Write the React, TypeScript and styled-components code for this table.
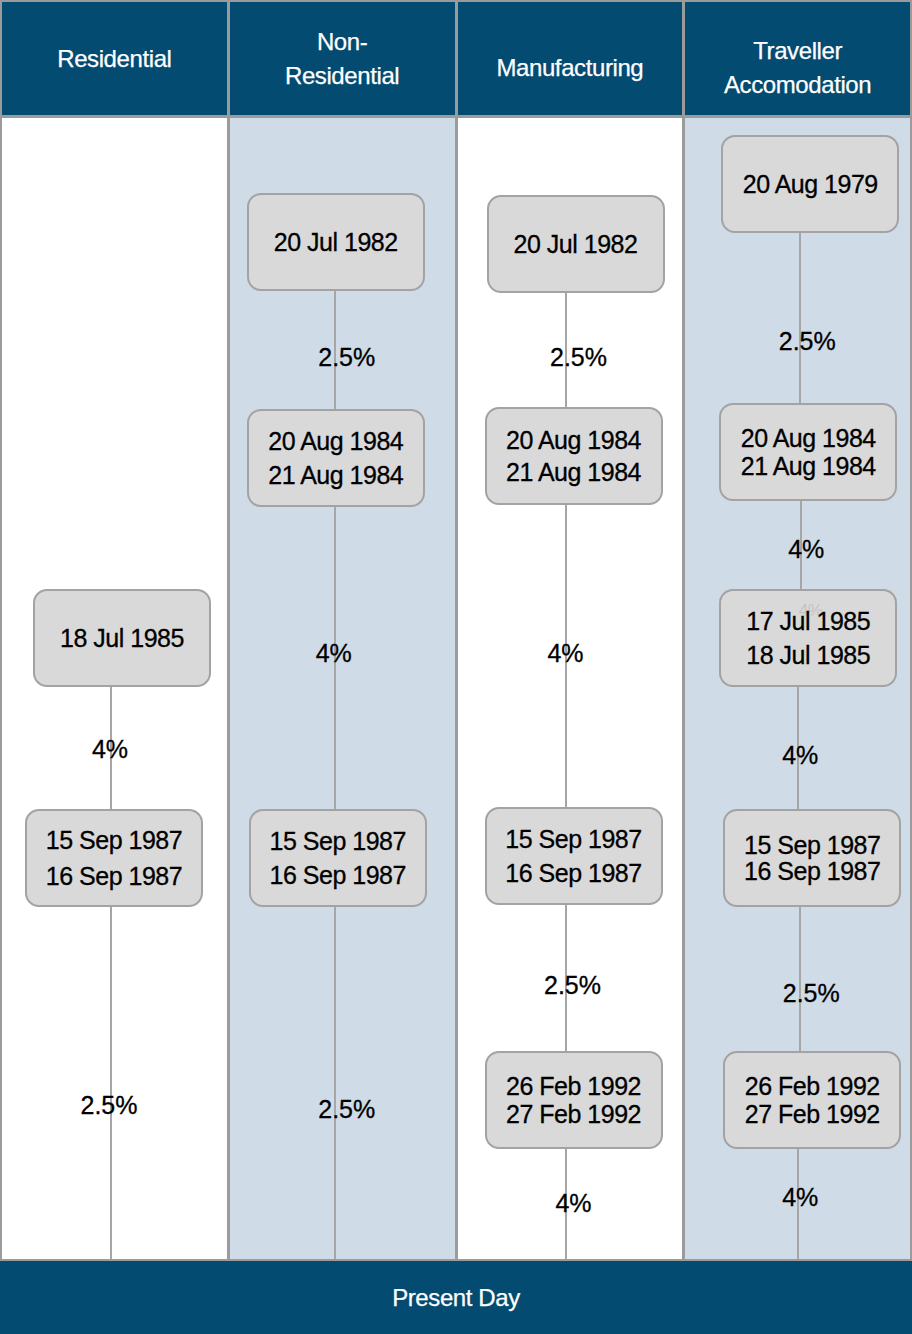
import React from 'react';
import styled, { createGlobalStyle } from 'styled-components';

type Node = { kind: 'node'; x: number; lines: string[]; lh: number; ghost?: string };
type Seg = { kind: 'seg'; h: number; line: number; ly: number; lx: number; label: string };
type Item = Node | Seg;

type Column = {
  title: string[];
  shaded: boolean;
  shift: number;
  top: number;
  items: Item[];
};

const columns: Column[] = [
  {
    title: ['Residential'],
    shaded: false,
    shift: 0,
    top: 471,
    items: [
      { kind: 'node', x: 31, lines: ['18 Jul 1985'], lh: 34 },
      { kind: 'seg', h: 122, line: 108, ly: 62, lx: 108, label: '4%' },
      { kind: 'node', x: 23, lines: ['15 Sep 1987', '16 Sep 1987'], lh: 36 },
      { kind: 'seg', h: 353, line: 108, ly: 198, lx: 107, label: '2.5%' },
    ],
  },
  {
    title: ['Non-', 'Residential'],
    shaded: true,
    shift: 0,
    top: 75,
    items: [
      { kind: 'node', x: 17, lines: ['20 Jul 1982'], lh: 34 },
      { kind: 'seg', h: 118, line: 104, ly: 66, lx: 117, label: '2.5%' },
      { kind: 'node', x: 17, lines: ['20 Aug 1984', '21 Aug 1984'], lh: 34 },
      { kind: 'seg', h: 302, line: 104, ly: 146, lx: 104, label: '4%' },
      { kind: 'node', x: 19, lines: ['15 Sep 1987', '16 Sep 1987'], lh: 34 },
      { kind: 'seg', h: 353, line: 104, ly: 202, lx: 117, label: '2.5%' },
    ],
  },
  {
    title: ['Manufacturing'],
    shaded: false,
    shift: 9,
    top: 77,
    items: [
      { kind: 'node', x: 29, lines: ['20 Jul 1982'], lh: 34 },
      { kind: 'seg', h: 114, line: 107, ly: 64, lx: 121, label: '2.5%' },
      { kind: 'node', x: 27, lines: ['20 Aug 1984', '21 Aug 1984'], lh: 32 },
      { kind: 'seg', h: 302, line: 107, ly: 148, lx: 108, label: '4%' },
      { kind: 'node', x: 27, lines: ['15 Sep 1987', '16 Sep 1987'], lh: 34 },
      { kind: 'seg', h: 146, line: 107, ly: 80, lx: 115, label: '2.5%' },
      { kind: 'node', x: 27, lines: ['26 Feb 1992', '27 Feb 1992'], lh: 28 },
      { kind: 'seg', h: 111, line: 107, ly: 54, lx: 116, label: '4%' },
    ],
  },
  {
    title: ['Traveller', 'Accomodation'],
    shaded: true,
    shift: 9,
    top: 17,
    items: [
      { kind: 'node', x: 36, lines: ['20 Aug 1979'], lh: 34 },
      { kind: 'seg', h: 170, line: 114, ly: 108, lx: 122, label: '2.5%' },
      { kind: 'node', x: 34, lines: ['20 Aug 1984', '21 Aug 1984'], lh: 28 },
      { kind: 'seg', h: 88, line: 115, ly: 48, lx: 121, label: '4%' },
      { kind: 'node', x: 34, lines: ['17 Jul 1985', '18 Jul 1985'], lh: 34, ghost: '4%' },
      { kind: 'seg', h: 122, line: 112, ly: 68, lx: 115, label: '4%' },
      { kind: 'node', x: 38, lines: ['15 Sep 1987', '16 Sep 1987'], lh: 26 },
      { kind: 'seg', h: 144, line: 114, ly: 86, lx: 126, label: '2.5%' },
      { kind: 'node', x: 38, lines: ['26 Feb 1992', '27 Feb 1992'], lh: 28 },
      { kind: 'seg', h: 111, line: 112, ly: 48, lx: 115, label: '4%' },
    ],
  },
];

const GlobalStyle = createGlobalStyle`
  html, body {
    margin: 0;
    padding: 0;
    background: #ffffff;
  }
  body {
    font-family: "Liberation Sans", Arial, Helvetica, sans-serif;
  }
  * {
    box-sizing: border-box;
  }
`;

const Page = styled.div`
  width: 912px;
  display: flex;
  flex-direction: column;
`;

const Grid = styled.div`
  display: grid;
  grid-template-columns: repeat(4, 1fr);
  grid-template-rows: 113px 1141px;
  grid-auto-flow: column;
  gap: 3px;
  padding: 2px;
  background: #9b9b9b;
`;

const HeaderCell = styled.div<{ $shift: number }>`
  background: #044b71;
  color: #ffffff;
  display: flex;
  flex-direction: column;
  align-items: center;
  justify-content: center;
  padding-top: ${(p) => p.$shift * 2}px;
  font-size: 24px;
  line-height: 34px;
  letter-spacing: -0.4px;
  -webkit-text-stroke: 0.25px #ffffff;
  text-align: center;
`;

const Body = styled.div<{ $shaded: boolean; $top: number }>`
  background: ${(p) => (p.$shaded ? '#cfdbe7' : '#ffffff')};
  display: flex;
  flex-direction: column;
  padding-top: ${(p) => p.$top}px;
  overflow: hidden;
`;

const DateBox = styled.div<{ $x: number; $lh: number }>`
  position: relative;
  margin-left: ${(p) => p.$x}px;
  width: 178px;
  height: 98px;
  flex: none;
  background: #d9d9d9;
  border: 2px solid #a3a3a3;
  border-radius: 14px;
  display: flex;
  flex-direction: column;
  align-items: center;
  justify-content: center;
  color: #000000;
  font-size: 25px;
  letter-spacing: -0.5px;
  line-height: ${(p) => p.$lh}px;
  -webkit-text-stroke: 0.3px #000000;
`;

const DateText = styled.span`
  position: relative;
  white-space: nowrap;
`;

const Ghost = styled.span`
  position: absolute;
  left: 50%;
  top: 10px;
  transform: translateX(-40%);
  font-size: 17px;
  line-height: 20px;
  color: #c4c4c4;
  -webkit-text-stroke: 0;
`;

const Segment = styled.div<{ $h: number; $line: number }>`
  position: relative;
  height: ${(p) => p.$h}px;
  flex: none;
  &::before {
    content: '';
    position: absolute;
    top: 0;
    bottom: 0;
    left: ${(p) => p.$line}px;
    width: 2px;
    background: #a6a6a6;
  }
`;

const Rate = styled.div<{ $ly: number; $lx: number }>`
  position: relative;
  margin-top: ${(p) => p.$ly - 14}px;
  margin-left: ${(p) => p.$lx - 40}px;
  width: 80px;
  text-align: center;
  font-size: 25px;
  line-height: 28px;
  color: #000000;
  -webkit-text-stroke: 0.3px #000000;
`;

const Footer = styled.div`
  height: 73px;
  background: #044b71;
  color: #ffffff;
  display: flex;
  align-items: center;
  justify-content: center;
  font-size: 24px;
  letter-spacing: -0.4px;
  -webkit-text-stroke: 0.25px #ffffff;
`;

const TimelineItem = ({ item }: { item: Item }) => {
  if (item.kind === 'node') {
    return (
      <DateBox $x={item.x} $lh={item.lh}>
        {item.ghost && <Ghost>{item.ghost}</Ghost>}
        {item.lines.map((l) => (
          <DateText key={l}>{l}</DateText>
        ))}
      </DateBox>
    );
  }
  return (
    <Segment $h={item.h} $line={item.line}>
      <Rate $ly={item.ly} $lx={item.lx}>
        {item.label}
      </Rate>
    </Segment>
  );
};

const App = () => {
  return (
    <Page>
      <GlobalStyle />
      <Grid>
        {columns.map((col) => (
          <React.Fragment key={col.title.join(' ')}>
            <HeaderCell $shift={col.shift}>
              {col.title.map((t) => (
                <div key={t}>{t}</div>
              ))}
            </HeaderCell>
            <Body $shaded={col.shaded} $top={col.top}>
              {col.items.map((item, i) => (
                <TimelineItem key={i} item={item} />
              ))}
            </Body>
          </React.Fragment>
        ))}
      </Grid>
      <Footer>Present Day</Footer>
    </Page>
  );
};

export default App;
